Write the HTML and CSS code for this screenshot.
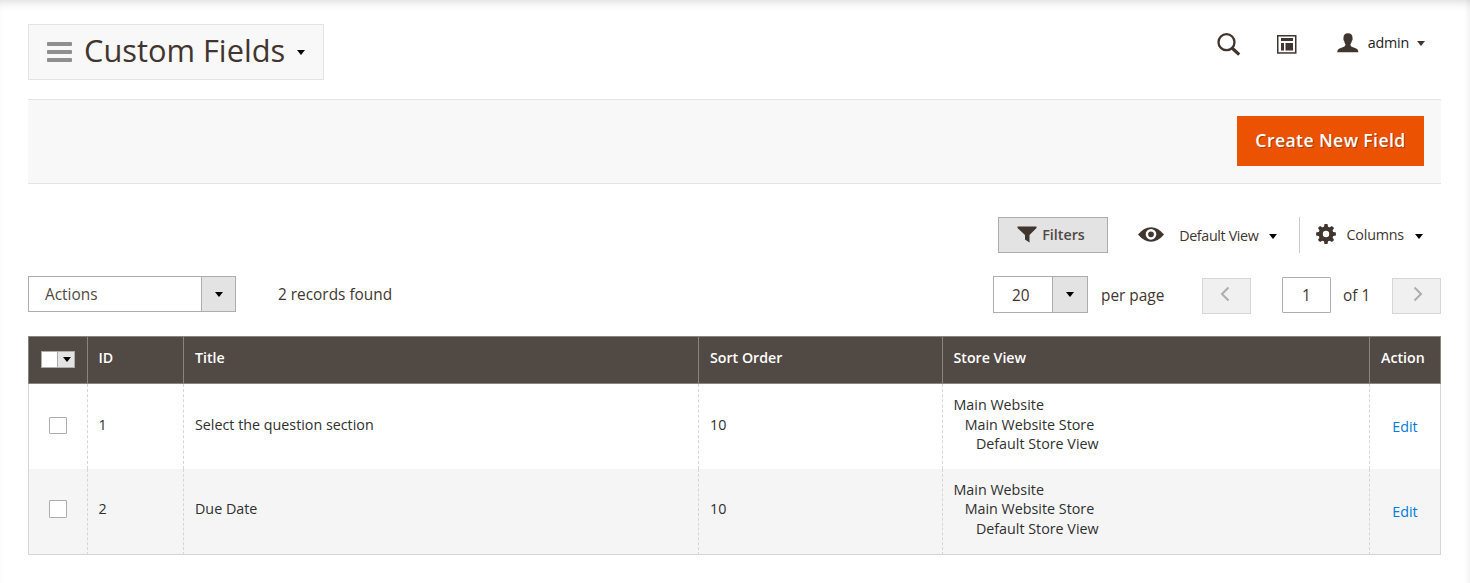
FILE: index.html
```html
<!DOCTYPE html>
<html lang="en">
<head>
  <meta charset="utf-8">
  <title>Custom Fields</title>
  <link rel="stylesheet" href="styles.css">
</head>
<body>
  <div class="page-wrapper">
    <header class="page-header">
      <div class="page-title">
        <svg class="menu-icon" width="25" height="21" viewBox="0 0 25 21">
          <rect y="0" width="25" height="4" rx="1"/>
          <rect y="8" width="25" height="4" rx="1"/>
          <rect y="16" width="25" height="4" rx="1"/>
        </svg>
        <h1>Custom Fields</h1>
        <span class="caret"></span>
      </div>
      <div class="header-actions">
        <svg class="search-icon" width="24" height="24" viewBox="0 0 24 24">
          <circle cx="9.5" cy="9.2" r="8" fill="none" stroke="#41362f" stroke-width="2.3"/>
          <path d="M15 15l7.2 6.600" stroke="#41362f" stroke-width="3.2"/>
        </svg>
        <svg class="layout-icon" width="20" height="19" viewBox="0 0 20 19">
          <rect x=".75" y=".75" width="18" height="17.200" fill="none" stroke="#41362f" stroke-width="1.500"/>
          <path d="M4 3h12v3H4zM4 8h3v7.500H4zM8.500 8H16v7.500H8.500z" fill="#41362f"/>
        </svg>
        <svg class="user-icon" width="22" height="20" viewBox="0 0 22 20">
          <path d="M6.500 5C6.300 2 8 .2 11 .2S15.700 2 15.500 5c.4 1.500-.2 2.500-.7 3-.3 2-1 2.500-1.300 3.200 0 1.200.2 2 1.200 2.500l4.500 1.800c1.800.8 2 1.700 2.100 3.700H.3c.1-2 .4-2.900 2.200-3.700L7 13.700c1-.5 1.400-1.300 1.400-2.500C8 10.500 7.500 10 7.200 8c-.6-.5-1-1.500-.7-3z" fill="#41362f"/>
        </svg>
        <span class="user-name">admin</span>
        <span class="caret caret-brown"></span>
      </div>
    </header>

    <div class="page-actions">
      <button type="button" class="action-primary">Create New Field</button>
    </div>

    <div class="grid-controls">
      <button type="button" class="filters-btn">
        <svg width="20" height="17" viewBox="0 0 20 17">
          <path d="M.5.500h19v1.600l-7 6.800V16.500l-4.500-3V8.900L.5 2.100z" fill="#41362f"/>
        </svg>
        <span class="filters-label">Filters</span>
      </button>
      <div class="view-control">
        <svg width="26" height="15" viewBox="0 0 26 15">
          <path d="M0 7.500Q6 .3 13 .3t13 7.200q-6 7.200-13 7.200T0 7.500z" fill="#41362f"/>
          <circle cx="13" cy="7.300" r="4.100" fill="none" stroke="#fff" stroke-width="2.500"/>
        </svg>
        <span class="view-label">Default View</span>
        <span class="caret"></span>
      </div>
      <div class="columns-control">
        <svg width="20" height="20" viewBox="-10 -10 20 20">
          <g fill="#41362f">
            <circle r="7.400"/>
            <path id="tooth" d="M-2.200-6.500L-1.500-9.900h3L2.200-6.500v13L1.500 9.900h-3L-2.200 6.500z"/>
            <use href="#tooth" transform="rotate(45)"/>
            <use href="#tooth" transform="rotate(90)"/>
            <use href="#tooth" transform="rotate(135)"/>
          </g>
          <circle r="3.200" fill="#fff"/>
        </svg>
        <span class="columns-label">Columns</span>
        <span class="caret"></span>
      </div>
    </div>

    <div class="grid-toolbar">
      <div class="select actions-select">
        <span class="select-text">Actions</span>
        <span class="select-arrow"><span class="caret"></span></span>
      </div>
      <span class="records">2 records found</span>
      <div class="select size-select">
        <span class="select-text">20</span>
        <span class="select-arrow"><span class="caret"></span></span>
      </div>
      <span class="per-page">per page</span>
      <button type="button" class="pager-btn pager-prev">
        <svg width="10" height="16" viewBox="0 0 10 16"><path d="M8.500 1.500L2 8l6.500 6.500"/></svg>
      </button>
      <span class="page-input">1</span>
      <span class="page-count">of 1</span>
      <button type="button" class="pager-btn pager-next">
        <svg width="10" height="16" viewBox="0 0 10 16"><path d="M1.500 1.500L8 8l-6.500 6.500"/></svg>
      </button>
    </div>

    <table class="data-grid">
      <colgroup>
        <col class="col-check">
        <col class="col-id">
        <col class="col-title">
        <col class="col-sort">
        <col class="col-store">
        <col class="col-action">
      </colgroup>
      <thead>
        <tr>
          <th class="check-cell"><div class="multicheck"><span class="multicheck-arrow"><span class="caret"></span></span></div></th>
          <th>ID</th>
          <th>Title</th>
          <th>Sort Order</th>
          <th>Store View</th>
          <th>Action</th>
        </tr>
      </thead>
      <tbody>
        <tr>
          <td class="check-cell"><span class="checkbox"></span></td>
          <td>1</td>
          <td>Select the question section</td>
          <td>10</td>
          <td>
            <div>Main Website</div>
            <div class="store-group">Main Website Store</div>
            <div class="store-view">Default Store View</div>
          </td>
          <td class="action-cell"><a href="#">Edit</a></td>
        </tr>
        <tr>
          <td class="check-cell"><span class="checkbox"></span></td>
          <td>2</td>
          <td>Due Date</td>
          <td>10</td>
          <td>
            <div>Main Website</div>
            <div class="store-group">Main Website Store</div>
            <div class="store-view">Default Store View</div>
          </td>
          <td class="action-cell"><a href="#">Edit</a></td>
        </tr>
      </tbody>
    </table>
  </div>
</body>
</html>
```
FILE: styles.css
```css
* {
  box-sizing: border-box;
}

body {
  margin: 0;
  background-color: #fff;
  color: #41362f;
  font-family: "Open Sans", "Noto Sans", sans-serif;
  font-size: 14.3px;
  line-height: 1.36;
}

.page-wrapper {
  height: 583px;
  padding: 24px 29px 0 28px;
  overflow: hidden;
  box-shadow: inset 0 8px 10px -6px rgba(0, 0, 0, 0.15), inset -9px 0 6px -7px rgba(0, 0, 0, 0.05);
}

svg {
  display: block;
  flex: none;
}

button {
  font-family: inherit;
  padding: 0;
  border-radius: 0;
}

.caret {
  flex: none;
  border-top: 5px solid #000;
  border-left: 4px solid transparent;
  border-right: 4px solid transparent;
}

.caret-brown {
  border-top-color: #41362f;
}

/* Header */
.page-header {
  display: flex;
  justify-content: space-between;
  align-items: flex-start;
  height: 75px;
}

.page-title {
  display: flex;
  align-items: center;
  width: 296px;
  height: 56px;
  padding-left: 18px;
  background-color: #f8f8f8;
  border: 1px solid #e3e3e3;
}

.menu-icon {
  fill: #8f8f8f;
}

.page-title h1 {
  margin: 0 12px 4px 12px;
  font-size: 30.8px;
  font-weight: 400;
  line-height: 40px;
}

.header-actions {
  display: flex;
  align-items: center;
  height: 40px;
  padding-right: 16px;
}

.search-icon {
  margin-top: 2px;
}

.layout-icon {
  margin-left: 36px;
}

.user-icon {
  margin: 0 9px 2px 40px;
}

.user-name {
  margin: 0 8px 2px 0;
  color: #222;
  letter-spacing: -0.2px;
}

.header-actions .caret {
  margin-bottom: 2px;
}

.page-actions {
  display: flex;
  justify-content: flex-end;
  align-items: center;
  height: 85px;
  padding-right: 17px;
  background-color: #f8f8f8;
  border-top: 1px solid #e3e3e3;
  border-bottom: 1px solid #e3e3e3;
}

.action-primary {
  width: 187px;
  height: 50px;
  margin-bottom: 1px;
  padding-bottom: 2px;
  background-color: #eb5202;
  border: none;
  color: #fff;
  font-size: 17.6px;
  font-weight: 600;
  letter-spacing: 0.4px;
  text-shadow: 1px 1px 0 rgba(0, 0, 0, 0.3);
}

/* Grid controls */
.grid-controls {
  display: flex;
  justify-content: flex-end;
  margin-top: 33px;
  height: 36px;
  padding-right: 18px;
}

.filters-btn {
  display: flex;
  align-items: center;
  width: 110px;
  height: 36px;
  padding-left: 18px;
  background-color: #e3e3e3;
  border: 1px solid #adadad;
  color: #514943;
  font-size: 14.3px;
  font-weight: 600;
}

.filters-btn svg {
  margin: 0 5px 2px 0;
}

.filters-label {
  margin-bottom: 2px;
}

.view-control,
.columns-control {
  display: flex;
  align-items: center;
}

.view-control {
  margin-left: 30px;
}

.view-control svg {
  margin-bottom: 1px;
}

.view-label {
  margin: 2px 11px 0 15px;
  letter-spacing: -0.36px;
}

.columns-control {
  margin-left: 22px;
  padding-left: 16px;
  border-left: 1px solid #ccc;
}

.columns-control svg {
  margin-bottom: 2px;
}

.columns-label {
  margin: 0 11px 0 10px;
  letter-spacing: -0.18px;
}

.grid-controls .caret {
  margin-top: 3px;
}

/* Mass actions and pager */
.grid-toolbar {
  display: flex;
  margin-top: 23px;
  height: 60px;
  font-size: 15.4px;
  line-height: 37px;
}

.select {
  display: flex;
  height: 36px;
  border: 1px solid #adadad;
  line-height: 35px;
}

.select-text {
  flex: 1;
  padding-left: 16px;
}

.select-arrow {
  display: flex;
  justify-content: center;
  align-items: center;
  width: 34px;
  background-color: #e3e3e3;
  border-left: 1px solid #adadad;
}

.actions-select {
  width: 208px;
  color: #514943;
}

.records {
  margin-left: 42px;
}

.size-select {
  width: 95px;
  height: 37px;
  margin-left: auto;
  line-height: 37px;
}

.size-select .select-text {
  padding-left: 18px;
}

.size-select .select-arrow {
  width: 35px;
}

.per-page {
  width: 114px;
  padding-left: 13px;
  line-height: 39px;
}

.pager-btn {
  display: flex;
  justify-content: center;
  width: 49px;
  height: 36px;
  margin-top: 2px;
  padding-top: 7px;
  background-color: #f0f0f0;
  border: 1px solid #d6d6d6;
}

.pager-prev {
  padding-right: 3px;
}

.pager-next {
  padding-left: 2px;
}

.pager-btn path {
  fill: none;
  stroke: #adadad;
  stroke-width: 2;
}

.page-input {
  width: 49px;
  height: 36px;
  margin: 1px 0 0 31px;
  border: 1px solid #adadad;
  border-radius: 1px;
  line-height: 35px;
  text-align: center;
}

.page-count {
  width: 61px;
  padding-left: 12px;
  line-height: 39px;
}

/* Data grid */
.data-grid {
  width: 1413px;
  table-layout: fixed;
  border-collapse: separate;
  border-spacing: 0;
  color: #303030;
}

.col-check {
  width: 60px;
}

.col-id {
  width: 96px;
}

.col-title {
  width: 515px;
}

.col-sort {
  width: 244px;
}

.col-store {
  width: 427px;
}

.col-action {
  width: 71px;
}

.data-grid th {
  height: 48px;
  padding: 0 0 4px 11px;
  background-color: #514943;
  border: solid #8a837f;
  border-width: 1px 1px 1px 0;
  color: #fff;
  font-size: 14.2px;
  font-weight: 600;
  text-align: left;
}

.data-grid td {
  height: 85px;
  padding: 0 0 4px 11px;
  border-right: 1px dashed #d6d6d6;
}

.data-grid th:nth-child(2),
.data-grid td:nth-child(2),
.data-grid th:nth-child(5),
.data-grid td:nth-child(5) {
  padding-left: 10.5px;
}

.data-grid th:first-child {
  border-left: 1px solid #8a837f;
}

.data-grid td:first-child {
  border-left: 1px solid #d6d6d6;
}

.data-grid td:last-child {
  border-right: 1px solid #d6d6d6;
}

.data-grid tbody tr:last-child td {
  height: 86px;
  padding-bottom: 5px;
  border-bottom: 1px solid #d6d6d6;
}

.data-grid tbody tr:nth-child(even) td {
  background-color: #f5f5f5;
}

.data-grid th.check-cell {
  padding: 0 0 2px 12px;
}

.multicheck {
  display: flex;
  justify-content: flex-end;
  width: 34px;
  height: 17px;
  background-color: #fff;
  border: 1px solid #adadad;
}

.multicheck-arrow {
  display: flex;
  justify-content: center;
  align-items: center;
  width: 17px;
  padding-left: 1px;
  background-color: #e3e3e3;
  border-left: 1px solid #adadad;
}

.data-grid td.check-cell {
  padding: 0 0 2px 20px;
}

.checkbox {
  display: block;
  width: 18px;
  height: 17px;
  background-color: #fff;
  border: 1px solid #adadad;
  border-radius: 1px;
}

.data-grid tr:last-child .checkbox {
  height: 18px;
}

.store-group {
  padding-left: 11.2px;
}

.store-view {
  padding-left: 22.4px;
}

.data-grid tbody tr td.action-cell {
  padding: 1px 0 0;
  text-align: center;
}

.action-cell a {
  color: #007bdb;
  text-decoration: none;
}
```
